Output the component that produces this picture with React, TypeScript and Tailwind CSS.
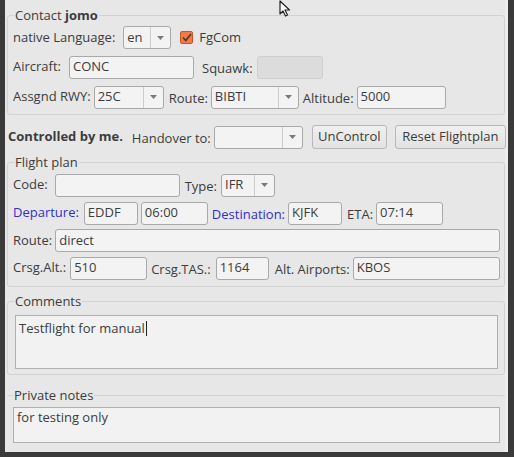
import type { ReactNode } from "react";

const FONT = { fontFamily: '"Open Sans", "Noto Sans", "DejaVu Sans", sans-serif' };

function Field({ value = "", width, disabled = false, grow = false }: { value?: string; width?: number; disabled?: boolean; grow?: boolean }) {
  return (
    <div
      className={
        "flex h-[23px] shrink-0 items-center rounded-[3px] border px-[3px] text-[13px] " +
        (disabled ? "border-[#cfcfcf] bg-[#dcdcdc]" : "border-[#a9a9a9] bg-[#f3f3f3] text-[#3c3c3c]") +
        (grow ? " min-w-0 flex-1" : "")
      }
      style={width ? { width } : undefined}
    >
      {value}
    </div>
  );
}

function Combo({ value = "", width }: { value?: string; width: number }) {
  return (
    <div
      className="flex h-[23px] shrink-0 items-stretch rounded-[3px] border border-[#a9a9a9] bg-[#f3f3f3] text-[13px] text-[#3c3c3c]"
      style={{ width }}
    >
      <div className="flex min-w-0 flex-1 items-center px-[3px]">{value}</div>
      <div className="flex w-[20px] items-center justify-center border-l border-[#cdcdcd]">
        <svg width="7" height="4" viewBox="0 0 7 4">
          <path d="M0 0h7L3.5 4z" fill="#7a7a7a" />
        </svg>
      </div>
    </div>
  );
}

function Label({ children, blue = false }: { children: ReactNode; blue?: boolean }) {
  return <span className={"shrink-0 whitespace-nowrap text-[13px] " + (blue ? "text-[#2f2fd0]" : "text-[#3c3c3c]")}>{children}</span>;
}

function Group({ title, children, className = "" }: { title: ReactNode; children: ReactNode; className?: string }) {
  return (
    <fieldset className={"ml-[2px] rounded-[3px] border border-[#d2d2d2] pl-[5px] pr-[4px] " + className}>
      <legend className="ml-[1px] px-[1px] text-[13px] leading-[18px] text-[#3c3c3c]">{title}</legend>
      {children}
    </fieldset>
  );
}

function Button({ children, width }: { children: ReactNode; width: number }) {
  return (
    <div
      className="flex h-[24px] shrink-0 items-center justify-center rounded-[3px] border border-[#b8b8b8] bg-gradient-to-b from-[#f0f0f0] to-[#e2e2e2] text-[13px] text-[#3c3c3c]"
      style={{ width }}
    >
      {children}
    </div>
  );
}

export default function App() {
  return (
    <div className="flex h-[457px] w-[514px] overflow-hidden bg-[#3a3a3a]" style={FONT}>
      <div className="relative ml-[5px] flex h-[452px] w-[503px] flex-col border-r-[3px] border-[#ededed] bg-[#e7e7e7]">
        <Group title={<>Contact <b className="font-bold">jomo</b></>} className="mt-[6px] pb-[5px]">
          <div className="flex flex-col gap-[6px] pt-[2px]">
            <div className="flex items-center gap-[4px]">
              <Label>native Language:</Label>
              <div className="ml-[4px]"><Combo value="en" width={48} /></div>
              <div className="ml-[5px] flex h-[13px] w-[13px] items-center justify-center rounded-[2px] border border-[#c4582a] bg-[#f07a48]">
                <svg width="10" height="9" viewBox="0 0 10 9">
                  <path d="M1 4.5l2.8 3L9 1" fill="none" stroke="#5b3322" strokeWidth="1.7" />
                </svg>
              </div>
              <span className="ml-[2px] text-[13px] text-[#3c3c3c]">FgCom</span>
            </div>
            <div className="flex items-center gap-[4px]">
              <Label>Aircraft:</Label>
              <div className="ml-[4px]"><Field value="CONC" width={125} /></div>
              <span className="ml-[4px]"><Label>Squawk:</Label></span>
              <Field width={66} disabled />
            </div>
            <div className="flex items-center gap-[3px]">
              <Label>Assgnd RWY:</Label>
              <Combo value="25C" width={70} />
              <span className="ml-[2px]"><Label>Route:</Label></span>
              <Combo value="BIBTI" width={88} />
              <span className="ml-[1px]"><Label>Altitude:</Label></span>
              <Field value="5000" width={89} />
            </div>
          </div>
        </Group>

        <div className="mt-[10px] flex items-center pl-[3px]">
          <span className="whitespace-nowrap text-[13px] font-bold text-[#3c3c3c]">Controlled by me.</span>
          <span className="ml-[9px]"><Label>Handover to:</Label></span>
          <div className="ml-[3px]"><Combo width={89} /></div>
          <div className="ml-[9px]"><Button width={75}>UnControl</Button></div>
          <div className="ml-[8px]"><Button width={111}>Reset Flightplan</Button></div>
        </div>

        <Group title="Flight plan" className="mt-[4px] pb-[6px]">
          <div className="flex flex-col gap-[4px] pt-[2px]">
            <div className="flex items-center gap-[4px]">
              <Label>Code:</Label>
              <div className="ml-[3px]"><Field width={125} /></div>
              <span className="ml-[1px]"><Label>Type:</Label></span>
              <Combo value="IFR" width={54} />
            </div>
            <div className="flex items-center gap-[3px]">
              <Label blue>Departure:</Label>
              <div className="ml-[2px]"><Field value="EDDF" width={54} /></div>
              <Field value="06:00" width={67} />
              <span className="ml-[1px]"><Label blue>Destination:</Label></span>
              <Field value="KJFK" width={54} />
              <span className="ml-[2px]"><Label>ETA:</Label></span>
              <Field value="07:14" width={67} />
            </div>
            <div className="flex items-center gap-[3px]">
              <Label>Route:</Label>
              <Field value="direct" grow />
            </div>
            <div className="flex items-center gap-[3px]">
              <Label>Crsg.Alt.:</Label>
              <div className="ml-[1px]"><Field value="510" width={77} /></div>
              <span className="ml-[1px]"><Label>Crsg.TAS.:</Label></span>
              <div className="ml-[2px]"><Field value="1164" width={53} /></div>
              <span className="ml-[3px]"><Label>Alt. Airports:</Label></span>
              <Field value="KBOS" grow />
            </div>
          </div>
        </Group>

        <Group title="Comments" className="mt-[5px] pb-[5px]">
          <div className="ml-[2px] mr-[2px] mt-[5px] h-[54px] border border-[#b0b0b0] bg-[#f2f2f2] px-[3px] pt-[2px] text-[13px] text-[#3c3c3c]">
            Testflight for manual<span className="ml-[1px] inline-block h-[15px] w-[1px] translate-y-[3px] bg-[#222]" />
          </div>
        </Group>

        <Group title="Private notes" className="mt-[11px] border-x-0 border-b-0 pb-[6px]">
          <div className="ml-[1px] mr-[1px] mt-[3px] h-[36px] border border-[#b0b0b0] bg-[#f2f2f2] px-[3px] text-[13px] text-[#3c3c3c]">
            for testing only
          </div>
        </Group>

        <svg className="absolute left-[274px] top-0" width="12" height="17" viewBox="0 0 12 17">
          <path d="M1 1v13l3-3 2.5 5 2-1-2.5-5h4.5z" fill="#fff" stroke="#222" strokeWidth="1.2" strokeLinejoin="round" />
        </svg>
      </div>
    </div>
  );
}
